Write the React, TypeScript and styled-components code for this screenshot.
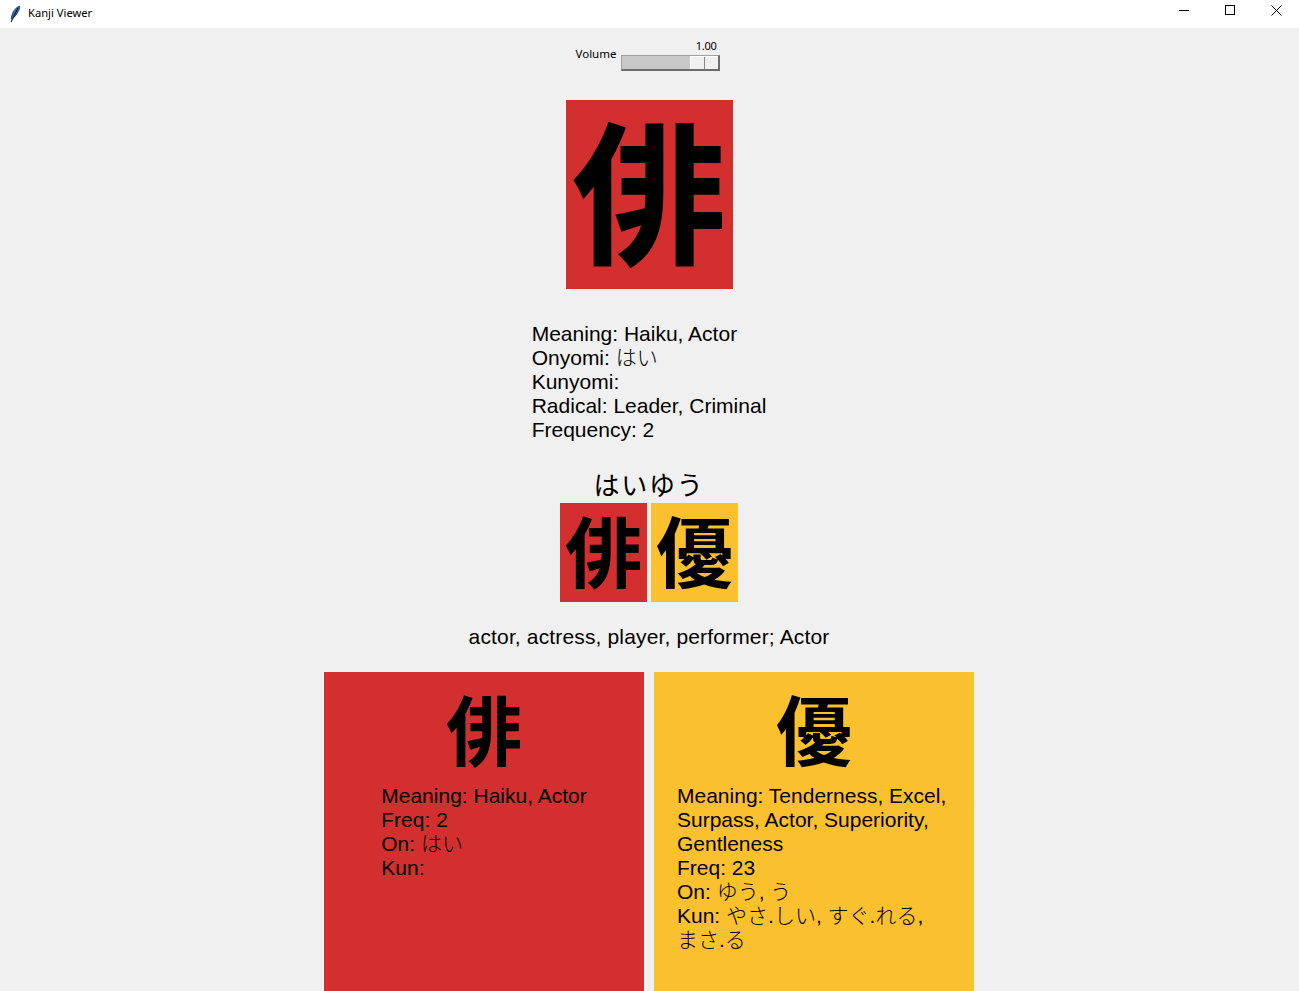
import React from "react";
import styled, { createGlobalStyle } from "styled-components";

const GlobalStyle = createGlobalStyle`
  html, body { margin: 0; padding: 0; background: #f0f0f0; overflow: hidden; }
  body { font-family: "Liberation Sans", "Noto Sans CJK JP", sans-serif; }
`;

const RED = "#d32f2f";
const YELLOW = "#fbc02d";
const JP = `"Liberation Sans", "Noto Sans CJK JP", sans-serif`;

const Window = styled.div`
  width: 1299px;
  height: 991px;
  display: flex;
  flex-direction: column;
  background: #f0f0f0;
  overflow: hidden;
`;

const TitleBar = styled.div`
  height: 28px;
  flex: none;
  background: #ffffff;
  display: flex;
  align-items: center;
  padding-left: 9px;
`;

const TitleText = styled.span`
  font-family: "Noto Sans", "Liberation Sans", sans-serif;
  font-size: 11.2px;
  color: #000;
  margin-left: 7px;
  margin-top: -3px;
`;

const Controls = styled.div`
  margin-left: auto;
  display: flex;
  height: 100%;
`;

const ControlButton = styled.div`
  width: 46px;
  height: 100%;
  display: flex;
  align-items: center;
  justify-content: center;
  margin-top: -4px;
`;

const Content = styled.div`
  flex: 1;
  display: flex;
  flex-direction: column;
  align-items: center;
  padding-right: 1px;
`;

const VolumeRow = styled.div`
  margin-top: 11px;
  display: flex;
  align-items: flex-start;
  gap: 5px;
  padding-right: 2px;
`;

const VolumeLabel = styled.span`
  font-family: "Noto Sans", "Liberation Sans", sans-serif;
  font-size: 11.5px;
  line-height: 14px;
  color: #000;
  margin-top: 8px;
`;

const ScaleCol = styled.div`
  display: flex;
  flex-direction: column;
  align-items: flex-end;
`;

const ScaleValue = styled.span`
  font-family: "Noto Sans", "Liberation Sans", sans-serif;
  font-size: 11px;
  line-height: 14px;
  color: #000;
  margin-right: 4px;
  letter-spacing: -0.3px;
`;

const Trough = styled.div`
  width: 99px;
  height: 16px;
  box-sizing: border-box;
  background: #c8c8c8;
  border-top: 1px solid #a0a0a0;
  border-left: 1px solid #a0a0a0;
  border-right: 2px solid #6c6c6c;
  border-bottom: 2px solid #6c6c6c;
  display: flex;
  justify-content: flex-end;
  margin-top: 2px;
`;

const Thumb = styled.div`
  width: 28px;
  height: 100%;
  box-sizing: border-box;
  background: #f0f0f0;
  border-top: 1px solid #ffffff;
  border-left: 1px solid #ffffff;
  display: flex;
`;

const ThumbHalf = styled.div`
  flex: 1;
  border-right: 1px solid #8a8a8a;
  &:last-child { border-right: none; }
`;

const BigTile = styled.div`
  margin-top: 29px;
  width: 167px;
  height: 189px;
  background: ${RED};
  display: flex;
  align-items: center;
  justify-content: center;
  font-family: "Noto Sans CJK JP", sans-serif;
  font-weight: 700;
  font-size: 154px;
  line-height: 1;
  color: #000;
`;

const Glyph = styled.span<{ $dy?: number }>`
  display: block;
  transform: translateY(${(p) => p.$dy ?? 0}px);
`;

const InfoBlock = styled.div`
  margin-top: 33px;
  font-family: ${JP};
  font-size: 21px;
  line-height: 24px;
  color: #000;
`;

const Line = styled.div`
  white-space: pre-wrap;
`;

const Kana = styled.span`
  font-weight: 300;
  word-break: keep-all;
`;

const Reading = styled.div`
  margin-top: 27px;
  font-family: "Noto Sans CJK JP", sans-serif;
  font-size: 26px;
  line-height: 30px;
  color: #000;
  letter-spacing: 1.7px;
`;

const TileRow = styled.div`
  margin-top: 4px;
  display: flex;
  gap: 4px;
`;

const SmallTile = styled.div<{ $bg: string }>`
  width: 87px;
  height: 99px;
  background: ${(p) => p.$bg};
  display: flex;
  align-items: center;
  justify-content: center;
  font-family: "Noto Sans CJK JP", sans-serif;
  font-weight: 700;
  font-size: 77px;
  line-height: 1;
  color: #000;
`;

const Meaning = styled.div`
  margin-top: 23px;
  font-family: ${JP};
  font-size: 21px;
  line-height: 24px;
  letter-spacing: 0.15px;
  color: #000;
`;

const CardRow = styled.div`
  margin-top: 23px;
  display: flex;
  gap: 10px;
`;

const Card = styled.div<{ $bg: string }>`
  width: 320px;
  height: 340px;
  background: ${(p) => p.$bg};
  display: flex;
  flex-direction: column;
  align-items: center;
  padding-top: 12px;
  box-sizing: border-box;
`;

const CardKanji = styled.div`
  height: 100px;
  display: flex;
  align-items: center;
  justify-content: center;
  font-family: "Noto Sans CJK JP", sans-serif;
  font-weight: 700;
  font-size: 76px;
  line-height: 1;
  color: #000;
`;

const CardText = styled.div`
  font-family: ${JP};
  font-size: 21px;
  line-height: 24px;
  color: #000;
  max-width: 274px;
`;

const Feather = () => (
  <svg width="12" height="18" viewBox="0 0 12 18">
    <path d="M10.5 1 C7 2.5 4 6 3 10 L2.2 13.5 L3.4 13.6 C6 12 8.8 8 10.2 4.5 C10.7 3.2 10.9 2 10.5 1 Z" fill="#3a6fc0" stroke="#1b3566" strokeWidth="0.8" />
    <path d="M9 3 L2 17" stroke="#1b1b1b" strokeWidth="1.1" />
  </svg>
);

const MinIcon = () => (
  <svg width="10" height="10" viewBox="0 0 10 10"><path d="M0 5.5 H10" stroke="#000" strokeWidth="1" /></svg>
);
const MaxIcon = () => (
  <svg width="10" height="10" viewBox="0 0 10 10"><rect x="0.5" y="0.5" width="9" height="9" fill="none" stroke="#000" strokeWidth="1" /></svg>
);
const CloseIcon = () => (
  <svg width="11" height="11" viewBox="0 0 11 11"><path d="M0.5 0.5 L10.5 10.5 M10.5 0.5 L0.5 10.5" stroke="#000" strokeWidth="1" /></svg>
);

const cards = [
  {
    kanji: "俳",
    bg: RED,
    meaning: "Haiku, Actor",
    freq: "2",
    on: "はい",
    kun: "",
  },
  {
    kanji: "優",
    bg: YELLOW,
    meaning: "Tenderness, Excel, Surpass, Actor, Superiority, Gentleness",
    freq: "23",
    on: "ゆう, う",
    kun: "やさ.しい, すぐ.れる, まさ.る",
  },
];

export default function App() {
  return (
    <Window>
      <GlobalStyle />
      <TitleBar>
        <Feather />
        <TitleText>Kanji Viewer</TitleText>
        <Controls>
          <ControlButton><MinIcon /></ControlButton>
          <ControlButton><MaxIcon /></ControlButton>
          <ControlButton><CloseIcon /></ControlButton>
        </Controls>
      </TitleBar>
      <Content>
        <VolumeRow>
          <VolumeLabel>Volume</VolumeLabel>
          <ScaleCol>
            <ScaleValue>1.00</ScaleValue>
            <Trough>
              <Thumb>
                <ThumbHalf />
                <ThumbHalf />
              </Thumb>
            </Trough>
          </ScaleCol>
        </VolumeRow>

        <BigTile><Glyph $dy={-9}>俳</Glyph></BigTile>

        <InfoBlock>
          <Line>Meaning: Haiku, Actor</Line>
          <Line>Onyomi: <Kana>はい</Kana></Line>
          <Line>Kunyomi: </Line>
          <Line>Radical: Leader, Criminal</Line>
          <Line>Frequency: 2</Line>
        </InfoBlock>

        <Reading>はいゆう</Reading>
        <TileRow>
          <SmallTile $bg={RED}><Glyph $dy={-4}>俳</Glyph></SmallTile>
          <SmallTile $bg={YELLOW}><Glyph $dy={-4}>優</Glyph></SmallTile>
        </TileRow>

        <Meaning>actor, actress, player, performer; Actor</Meaning>

        <CardRow>
          {cards.map((c) => (
            <Card key={c.kanji} $bg={c.bg}>
              <CardKanji><Glyph $dy={-7}>{c.kanji}</Glyph></CardKanji>
              <CardText>
                <Line>Meaning: {c.meaning}</Line>
                <Line>Freq: {c.freq}</Line>
                <Line>On: <Kana>{c.on}</Kana></Line>
                <Line>Kun: <Kana>{c.kun}</Kana></Line>
              </CardText>
            </Card>
          ))}
        </CardRow>
      </Content>
    </Window>
  );
}
